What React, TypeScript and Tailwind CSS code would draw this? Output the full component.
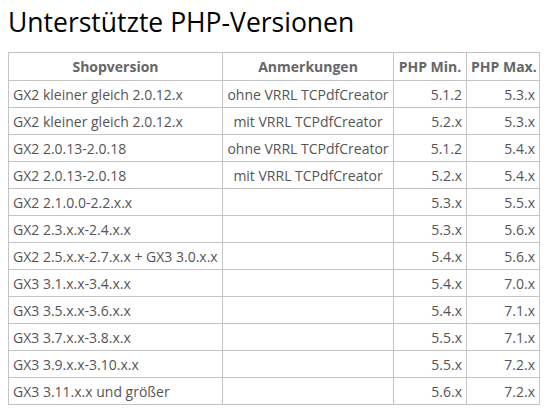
const rows: [string, string, string, string][] = [
  ['GX2 kleiner gleich 2.0.12.x', 'ohne VRRL TCPdfCreator', '5.1.2', '5.3.x'],
  ['GX2 kleiner gleich 2.0.12.x', 'mit VRRL TCPdfCreator', '5.2.x', '5.3.x'],
  ['GX2 2.0.13-2.0.18', 'ohne VRRL TCPdfCreator', '5.1.2', '5.4.x'],
  ['GX2 2.0.13-2.0.18', 'mit VRRL TCPdfCreator', '5.2.x', '5.4.x'],
  ['GX2 2.1.0.0-2.2.x.x', '', '5.3.x', '5.5.x'],
  ['GX2 2.3.x.x-2.4.x.x', '', '5.3.x', '5.6.x'],
  ['GX2 2.5.x.x-2.7.x.x + GX3 3.0.x.x', '', '5.4.x', '5.6.x'],
  ['GX3 3.1.x.x-3.4.x.x', '', '5.4.x', '7.0.x'],
  ['GX3 3.5.x.x-3.6.x.x', '', '5.4.x', '7.1.x'],
  ['GX3 3.7.x.x-3.8.x.x', '', '5.5.x', '7.1.x'],
  ['GX3 3.9.x.x-3.10.x.x', '', '5.5.x', '7.2.x'],
  ['GX3 3.11.x.x und größer', '', '5.6.x', '7.2.x'],
];

export default function App() {
  return (
    <div className="w-[549px] h-[413px] bg-white px-2 pt-[4px] font-['Open_Sans',sans-serif]">
      <h1 className="text-[26.5px] leading-[36px] text-black mb-[12px]">Unterstützte PHP-Versionen</h1>
      <table className="w-[531px] table-fixed border-collapse text-[14px] text-[#555]">
        <colgroup>
          <col className="w-[214px]" />
          <col className="w-[171px]" />
          <col className="w-[73px]" />
          <col className="w-[73px]" />
        </colgroup>
        <thead>
          <tr className="h-[28px]">
            <th className="border border-[#c4c4c4] font-bold text-[#666] text-center px-1 whitespace-nowrap">Shopversion</th>
            <th className="border border-[#c4c4c4] font-bold text-[#666] text-center px-1 whitespace-nowrap">Anmerkungen</th>
            <th className="border border-[#c4c4c4] font-bold text-[#666] text-center px-1 whitespace-nowrap">PHP Min.</th>
            <th className="border border-[#c4c4c4] font-bold text-[#666] text-center px-1 whitespace-nowrap">PHP Max.</th>
          </tr>
        </thead>
        <tbody>
          {rows.map((r, i) => (
            <tr key={i} className="h-[27px]">
              <td className="border border-[#c4c4c4] px-1 whitespace-nowrap">{r[0]}</td>
              <td className="border border-[#c4c4c4] px-1 text-center whitespace-nowrap">{r[1]}</td>
              <td className="border border-[#c4c4c4] px-1 text-right">{r[2]}</td>
              <td className="border border-[#c4c4c4] px-1 text-right">{r[3]}</td>
            </tr>
          ))}
        </tbody>
      </table>
    </div>
  );
}
